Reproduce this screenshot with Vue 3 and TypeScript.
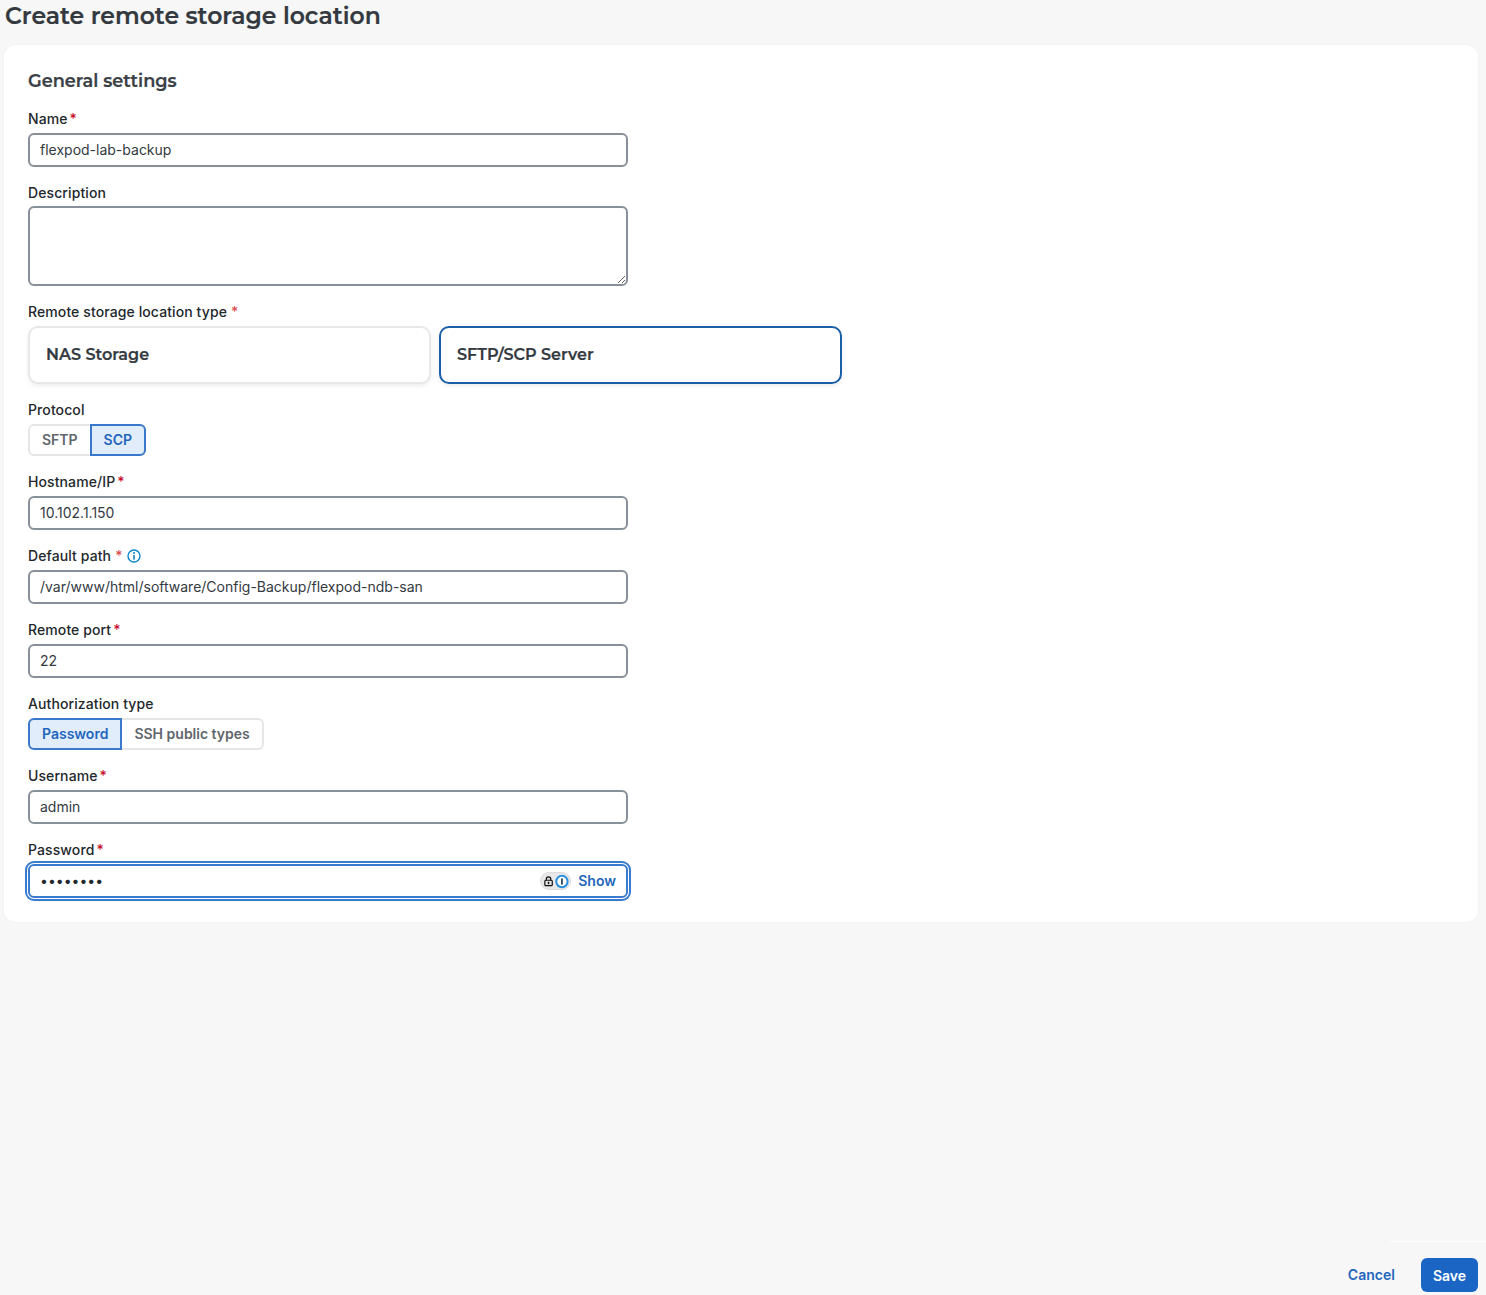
<script setup lang="ts">
import { ref } from 'vue';

interface Field {
  label: string;
  value: string;
  info?: boolean;
  spaced?: boolean;
}

const locationTypes = ['NAS Storage', 'SFTP/SCP Server'];
const selectedType = ref('SFTP/SCP Server');

const protocols = ['SFTP', 'SCP'];
const protocol = ref('SCP');

const authTypes = ['Password', 'SSH public types'];
const authType = ref('Password');

const serverFields: Field[] = [
  { label: 'Hostname/IP', value: '10.102.1.150' },
  { label: 'Default path', value: '/var/www/html/software/Config-Backup/flexpod-ndb-san', info: true, spaced: true },
  { label: 'Remote port', value: '22' },
];
</script>

<template>
  <div class="page">
    <h1 class="title">Create remote storage location</h1>

    <section class="card">
      <h2 class="card-title">General settings</h2>

      <div class="field">
        <label class="label">Name<span class="req">*</span></label>
        <input class="input" type="text" value="flexpod-lab-backup" />
      </div>

      <div class="field">
        <label class="label tight">Description</label>
        <textarea class="input area"></textarea>
      </div>

      <div class="field">
        <label class="label">Remote storage location type<span class="req wide">*</span></label>
        <div class="tiles">
          <button
            v-for="t in locationTypes"
            :key="t"
            type="button"
            :class="['tile', { active: selectedType === t }]"
            @click="selectedType = t"
          >{{ t }}</button>
        </div>
      </div>

      <div class="field">
        <label class="label">Protocol</label>
        <div class="toggle">
          <button
            v-for="p in protocols"
            :key="p"
            type="button"
            :class="['toggle-btn', { on: protocol === p }]"
            @click="protocol = p"
          >{{ p }}</button>
        </div>
      </div>

      <div v-for="f in serverFields" :key="f.label" class="field">
        <label class="label">
          {{ f.label }}<span :class="['req', { wide: f.spaced }]">*</span>
          <svg v-if="f.info" class="info" viewBox="0 0 14 14" width="14" height="14">
            <circle cx="7" cy="7" r="6" fill="none" stroke="#0d87c9" stroke-width="1.4" />
            <circle cx="7" cy="4.1" r="1" fill="#0d87c9" />
            <rect x="6.2" y="6" width="1.6" height="4.6" fill="#0d87c9" />
          </svg>
        </label>
        <input class="input" type="text" :value="f.value" />
      </div>

      <div class="field">
        <label class="label">Authorization type</label>
        <div class="toggle">
          <button
            v-for="a in authTypes"
            :key="a"
            type="button"
            :class="['toggle-btn', { on: authType === a }]"
            @click="authType = a"
          >{{ a }}</button>
        </div>
      </div>

      <div class="field">
        <label class="label">Username<span class="req">*</span></label>
        <input class="input" type="text" value="admin" />
      </div>

      <div class="field">
        <label class="label">Password<span class="req">*</span></label>
        <div class="password">
          <input class="pw-input" type="password" value="password" />
          <span class="pw-pill">
            <svg viewBox="0 0 12 12" width="12" height="12">
              <path d="M3.6 5.4V3.9a2.4 2.4 0 0 1 4.8 0v1.5" fill="none" stroke="#111" stroke-width="1.3" />
              <rect x="2" y="5.2" width="8" height="5.8" rx="1" fill="none" stroke="#111" stroke-width="1.3" />
              <rect x="5.2" y="6.8" width="1.6" height="2.6" fill="#111" />
            </svg>
            <svg viewBox="0 0 15 15" width="15" height="15">
              <circle cx="7.5" cy="7.5" r="7.2" fill="#2a8fe0" />
              <circle cx="7.5" cy="7.5" r="5" fill="#fff" />
              <rect x="6.6" y="3.9" width="1.8" height="7.2" rx="0.5" fill="#1a3a5c" />
            </svg>
          </span>
          <a class="show">Show</a>
        </div>
      </div>
    </section>

    <div class="footer-rule"></div>
    <footer class="footer">
      <button type="button" class="cancel">Cancel</button>
      <button type="button" class="save">Save</button>
    </footer>
  </div>
</template>

<style scoped>
.page {
  height: 1295px;
  display: flex;
  flex-direction: column;
  padding: 0 8px 3px 4px;
  box-sizing: border-box;
  background: #f7f7f7;
  color: #343a3f;
  font-family: Inter, "Liberation Sans", sans-serif;
  overflow: hidden;
}

.title {
  margin: 0 0 13px 1px;
  font-family: Montserrat, Inter, "Open Sans", sans-serif;
  font-size: 23.5px;
  line-height: 32px;
  font-weight: 600;
  -webkit-text-stroke: 0.2px #33393e;
  color: #33393e;
}

.card {
  background: #fff;
  border-radius: 12px;
  padding: 24px;
  height: 877px;
  box-sizing: border-box;
  box-shadow: 0 0 3px rgba(0, 0, 0, 0.04);
}

.card-title {
  margin: 0 0 16px;
  font-family: Montserrat, Inter, "Open Sans", sans-serif;
  font-size: 17.7px;
  line-height: 24px;
  font-weight: 600;
  -webkit-text-stroke: 0.2px #3a4045;
  color: #3a4045;
}

.field {
  margin-bottom: 16px;
}

.label {
  display: block;
  margin-bottom: 4px;
  font-size: 14px;
  line-height: 20px;
  font-weight: 500;
  letter-spacing: 0.1px;
  color: #23282c;
}

.label.tight {
  margin-bottom: 3px;
}

.req {
  margin-left: 2px;
  color: #c8102e;
}

.req.wide {
  margin-left: 4px;
  color: #d9504f;
}

.info {
  margin-left: 4px;
  vertical-align: -2px;
}

.input {
  display: block;
  width: 600px;
  height: 34px;
  box-sizing: border-box;
  padding: 0 10px 2px;
  border: 2px solid #889099;
  border-radius: 6px;
  background: #fff;
  font-family: inherit;
  font-size: 14px;
  color: #343a3f;
  outline: none;
}

.area {
  height: 80px;
  padding: 6px 10px;
  resize: vertical;
}

.tiles {
  display: flex;
  gap: 8px;
}

.tile {
  width: 403px;
  height: 58px;
  box-sizing: border-box;
  padding: 0 16px 2px;
  border: 2px solid #e6e8ea;
  border-radius: 10px;
  background: #fff;
  text-align: left;
  font-family: Montserrat, Inter, "Open Sans", sans-serif;
  font-size: 16px;
  font-weight: 600;
  -webkit-text-stroke: 0.2px #343a3f;
  color: #343a3f;
  box-shadow: 0 2px 4px rgba(0, 0, 0, 0.07);
}

.tile.active {
  border-color: #1b5fa8;
}

.toggle {
  display: flex;
}

.toggle-btn {
  height: 32px;
  box-sizing: border-box;
  padding: 0 12px 1px;
  border: 2px solid #e4e6e8;
  background: #fff;
  font-family: inherit;
  font-size: 14px;
  font-weight: 600;
  color: #5f666c;
}

.toggle-btn:first-child {
  border-radius: 6px 0 0 6px;
  border-right: 0;
}

.toggle-btn:last-child {
  border-radius: 0 6px 6px 0;
  border-left: 0;
}

.toggle-btn.on {
  border: 2px solid #3a78cc;
  background: #e2edfb;
  color: #1f66bd;
}

.password {
  display: flex;
  align-items: center;
  width: 600px;
  height: 34px;
  box-sizing: border-box;
  padding: 0 10px;
  border: 2px solid #3a7bd0;
  border-radius: 6px;
  background: #fff;
  box-shadow: 0 0 0 1px #fff, 0 0 0 3px #3a7bd0;
}

.pw-input {
  flex: 1;
  min-width: 0;
  border: 0;
  padding: 0 0 2px;
  outline: none;
  font-family: inherit;
  font-size: 14px;
  color: #23282c;
}

.pw-pill {
  display: flex;
  align-items: center;
  justify-content: flex-end;
  gap: 1px;
  width: 31px;
  height: 18px;
  box-sizing: border-box;
  padding: 0 1px 0 2px;
  border: 1px solid #dcdcdc;
  border-radius: 9px;
  background: #e8e8e8;
}

.show {
  margin-left: 7px;
  padding-bottom: 1px;
  font-size: 14px;
  font-weight: 600;
  color: #1f66bd;
}

.footer-rule {
  margin-top: auto;
  margin-bottom: 16px;
  align-self: flex-end;
  width: 96px;
  height: 1px;
  margin-right: -8px;
  background: #fff;
}

.footer {
  display: flex;
  justify-content: flex-end;
  align-items: center;
  gap: 26px;
}

.cancel {
  border: 0;
  padding: 0 0 2px;
  background: none;
  font-family: inherit;
  font-size: 14px;
  font-weight: 600;
  letter-spacing: 0.02px;
  color: #1f66bd;
}

.save {
  width: 57px;
  height: 34px;
  border: 0;
  padding: 0;
  border-radius: 6px;
  background: #1b66c4;
  font-family: inherit;
  font-size: 14px;
  font-weight: 600;
  color: #fff;
}
</style>

<style>
html,
body {
  margin: 0;
  background: #f7f7f7;
}
</style>
